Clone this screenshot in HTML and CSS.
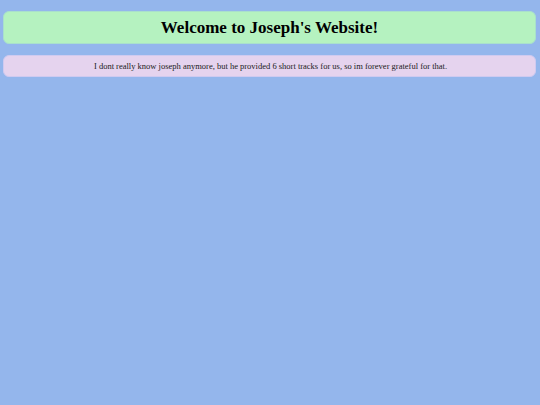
FILE: index.html
```html
<!DOCTYPE html>
<html lang="en">
<head>
  <meta charset="UTF-8" />
  <title>Joseph's Website</title>
  <link rel="stylesheet" href="styles.css">
</head>
<body>
  <header class="banner">
    <h1>Welcome to Joseph's Website!</h1>
  </header>

  <div class="note">
    <p>I dont really know joseph anymore, but he provided 6 short tracks for us, so im forever grateful for that.</p>
  </div>
</body>
</html>
```

FILE: styles.css
```css
body {
  margin: 0;
  padding: 11px 4px 11px 3px;
  background-color: #94b6ec;
  font-family: 'Liberation Serif', 'Times New Roman', serif;
  color: #1a1a1a;
}

.banner {
  background: #b5f2c0;
  border: 1px solid #a9e0cc;
  border-radius: 6px;
  text-align: center;
  padding: 6px;
}

.banner h1 {
  margin: 0;
  font-size: 17px;
  line-height: 19px;
  font-weight: 700;
  color: #000;
}

.note {
  margin-top: 11px;
  background: #e5d3ee;
  border: 1px solid #cfcaf0;
  border-radius: 6px;
  text-align: center;
  padding: 5px 5px 5px 7px;
}

.note p {
  margin: 0;
  font-size: 8.5px;
  line-height: 10px;
}
```
